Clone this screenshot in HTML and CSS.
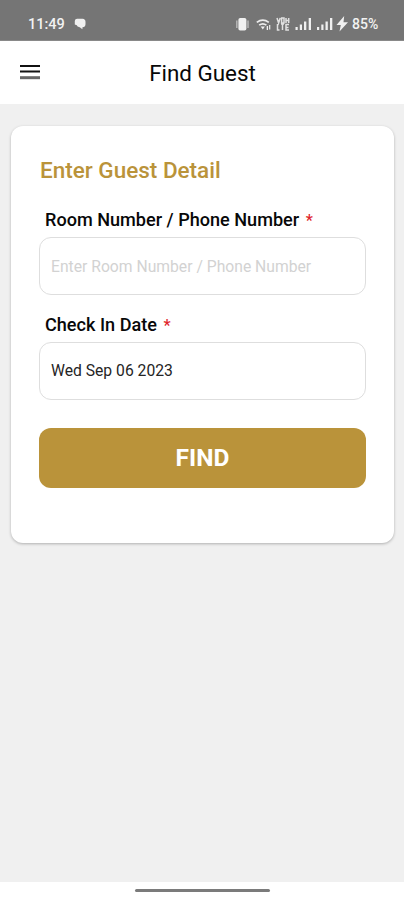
FILE: index.html
```html
<!DOCTYPE html>
<html lang="en">
<head>
<meta charset="utf-8">
<title>Find Guest</title>
<link rel="stylesheet" href="styles.css">
</head>
<body>
<div class="status">
  <span class="time">11:49</span>
  <svg class="chat" width="12" height="12" viewBox="0 0 12 12"><path d="M3.2.8h5.3a3.2 3.2 0 0 1 3 3.2v2.3a3 3 0 0 1-3 2.9L8.4 11.3 5.7 9.2 3.6 8.6 2.8 7.2.8 6.4V3a2.4 2.4 0 0 1 2.4-2.2z"/></svg>
  <svg class="icons" width="114" height="18" viewBox="235 15 114 18">
    <rect x="238.4" y="18" width="8" height="12.5" rx="1.8"/>
    <path class="soft" d="M236 20.5h1.6v7.5H236zM247.2 20.5h1.6v7.5h-1.6z"/>
    <g class="wifi"><path d="M256.8 22.4q6-4.6 12 0M259.2 25.2q3.6-2.8 7.2 0"/></g>
    <path d="M260.7 26.6h4.2l-2.1 2.8zM266.7 26h1.3v4h-1.3zM269.1 25h1.2v4.5h-1.2z"/>
    <g class="volte"><path d="M277 18l1.6 5 1.6-5M281.6 18h2.4v5h-2.4zM286 18v5M288.7 18v5M286 20.5h3M277.5 24v6h2M281 24h3M282.5 24v6M289 24.5h-3V30h3M286 27.5h2.5"/></g>
    <path d="M295.5 27h2.2v3h-2.2zM299.8 24.5h2.2V30h-2.2zM304 21.5h2.3V30H304zM308.7 18h2.3v12h-2.3zM317 27h2.2v3H317zM321.3 24.5h2.2V30h-2.2zM325.5 21.5h2.3V30h-2.3zM330 18h2.3v12H330z"/>
    <path d="M344.2 16L336.5 25h4.3l-1.3 6.6 8.5-9.3h-4.5z"/>
  </svg>
  <span class="battery">85%</span>
</div>
<header class="bar">
  <svg class="menu" width="20" height="15" viewBox="0 0 20 15"><path d="M0 0h20v2H0zM0 5.6h20v2H0z"/><path class="last" d="M0 11.2h20v3H0z"/></svg>
  <h1>Find Guest</h1>
</header>
<main>
  <form class="card">
    <h2>Enter Guest Detail</h2>
    <label class="l1">Room Number / Phone Number <b>*</b></label>
    <div class="field placeholder">Enter Room Number / Phone Number</div>
    <label class="l2">Check In Date <b>*</b></label>
    <div class="field date">Wed Sep 06 2023</div>
    <button type="button">FIND</button>
  </form>
</main>
<footer><div class="handle"></div></footer>
</body>
</html>
```
FILE: styles.css
```css
* { box-sizing: border-box; }
body {
  margin: 0;
  height: 900px;
  display: flex;
  flex-direction: column;
  background: #f0f0f0;
  font-family: Roboto, sans-serif;
  color: #080808;
  overflow: hidden;
}
.status {
  height: 41px;
  padding: 8px 24px 0 28px;
  background: #757575;
  border-bottom: 1px solid #898989;
  display: flex;
  align-items: center;
  color: #f2f2f2;
  fill: #f0f0f0;
}
.time { width: 37px; font-size: 14.5px; font-weight: 500; white-space: nowrap; }
.chat { margin-left: 9px; }
.icons { margin-left: auto; }
.soft { opacity: .5; }
.wifi, .volte { fill: none; stroke: #ededed; stroke-width: 1.7; }
.volte { stroke-width: 1.5; opacity: .9; }
.battery { width: 28px; margin-left: 3px; font-size: 14px; font-weight: 500; white-space: nowrap; }
.bar {
  height: 63px;
  background: #fff;
  display: grid;
  grid-template-columns: 20px 1fr 20px;
  align-items: center;
  padding: 0 19px 0 20px;
}
.menu { fill: #111; margin-top: -1px; }
.last { fill: #666; }
h1 { margin: 1px 0 0; font-size: 22.4px; font-weight: 400; text-align: center; line-height: 26px; }
main { flex: 1; padding: 22px 10px 0 11px; }
.card {
  height: 417px;
  padding: 31px 28px 0;
  border-radius: 12px;
  background: #fff;
  box-shadow: 0 1px 3px rgba(0, 0, 0, .27);
  display: flex;
  flex-direction: column;
}
h2 { margin: 0 0 0 1px; color: #ba933a; font-size: 22.5px; font-weight: 500; line-height: 26px; }
label { height: 22px; margin-left: 6px; font-size: 18.1px; font-weight: 500; line-height: 22px; white-space: nowrap; }
label b { margin-left: 2px; color: #e0252b; font-size: 16px; font-weight: 500; line-height: 1; }
.l1 { margin-top: 26px; margin-bottom: 6px; }
.l2 { margin-top: 19px; margin-bottom: 6px; }
.field {
  height: 58px;
  border: 1px solid #dedede;
  border-radius: 12px;
  padding: 0 11px;
  line-height: 57px;
  font-size: 15.7px;
  white-space: nowrap;
}
.placeholder { color: #d2d2d2; }
.date { color: #252525; line-height: 56px; }
button {
  height: 60px;
  margin-top: 28px;
  padding: 0;
  border: 0;
  border-radius: 12px;
  background: #ba933a;
  color: #fff;
  font: 700 24.5px/60px Roboto, sans-serif;
}
footer { height: 18px; background: #fff; padding-top: 7px; }
.handle { width: 135px; height: 3px; margin: 0 auto; border-radius: 2px; background: #7b7b7b; }
```
